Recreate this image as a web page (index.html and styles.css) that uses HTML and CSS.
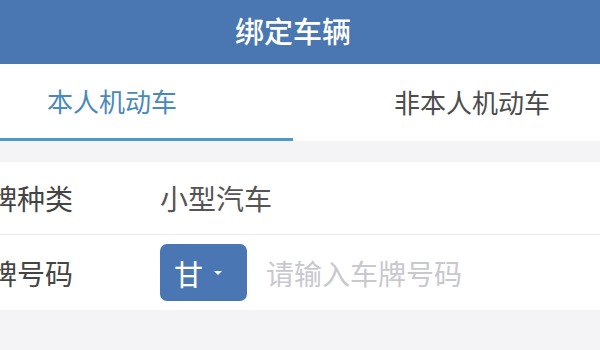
FILE: index.html
```html
<!DOCTYPE html>
<html lang="zh-CN">
<head>
    <meta charset="UTF-8">
    <title>绑定车辆</title>
    <link rel="stylesheet" href="styles.css">
</head>
<body>
<div class="page">
    <div class="head">
        <span class="title">绑定车辆</span>
    </div>

    <div class="tabs">
        <div class="tab tab_left active">本人机动车</div>
        <div class="tab tab_right">非本人机动车</div>
    </div>

    <div class="form">
        <div class="row">
            <div class="label"><span>号牌种类</span></div>
            <div class="value">小型汽车</div>
        </div>
        <div class="row">
            <div class="label"><span>号牌号码</span></div>
            <div class="value">
                <div class="province">甘<span class="caret"></span></div>
                <input type="text" class="plate" placeholder="请输入车牌号码">
            </div>
        </div>
    </div>
</div>
</body>
</html>
```

FILE: styles.css
```css
html, body {
    margin: 0;
    padding: 0;
    overflow: hidden;
}

body {
    background-color: #f4f4f7;
    font-family: "Noto Sans CJK SC", "Noto Sans", sans-serif;
}

.page {
    width: 600px;
    height: 350px;
}

.head {
    height: 64px;
    background-color: #4a77b1;
    display: flex;
    align-items: center;
    justify-content: center;
    padding-right: 14px;
    padding-bottom: 4px;
    box-sizing: border-box;
}

.title {
    color: #ffffff;
    font-size: 29px;
    font-weight: 500;
}

.tabs {
    height: 77px;
    background-color: #ffffff;
    display: flex;
}

.tab {
    font-size: 26px;
    color: #4c4c4c;
    display: flex;
    align-items: center;
    box-sizing: border-box;
    padding-bottom: 2px;
}

.tab_left {
    width: 293px;
    padding-left: 47px;
}

.tab_right {
    flex: 1;
    padding-left: 101px;
}

.active {
    color: #4a8ab9;
    border-bottom: 3px solid #4f98cc;
}

.form {
    margin-top: 21px;
    background-color: #ffffff;
}

.row {
    display: flex;
    align-items: center;
    height: 72px;
}

.row + .row {
    height: 75px;
    border-top: 1px solid #ebebef;
}

.label {
    width: 73px;
    display: flex;
    justify-content: flex-end;
    overflow: hidden;
    white-space: nowrap;
    font-size: 28px;
    color: #444444;
}

.value {
    flex: 1;
    display: flex;
    align-items: center;
    margin-left: 87px;
    font-size: 28px;
    color: #555555;
}

.province {
    width: 87px;
    height: 57px;
    background-color: #4a77b3;
    border-radius: 7px;
    color: #ffffff;
    font-size: 29px;
    display: flex;
    align-items: center;
    padding-left: 14px;
    box-sizing: border-box;
}

.caret {
    margin-left: 11px;
    border-left: 4px solid transparent;
    border-right: 4px solid transparent;
    border-top: 4px solid #ffffff;
}

.plate {
    margin-left: 19px;
    border: none;
    outline: none;
    padding: 0;
    width: 300px;
    font-family: "Noto Sans CJK SC", "Noto Sans", sans-serif;
    font-size: 28px;
    color: #555555;
    background: transparent;
}

.plate::placeholder {
    color: #c8c8ce;
}
```
